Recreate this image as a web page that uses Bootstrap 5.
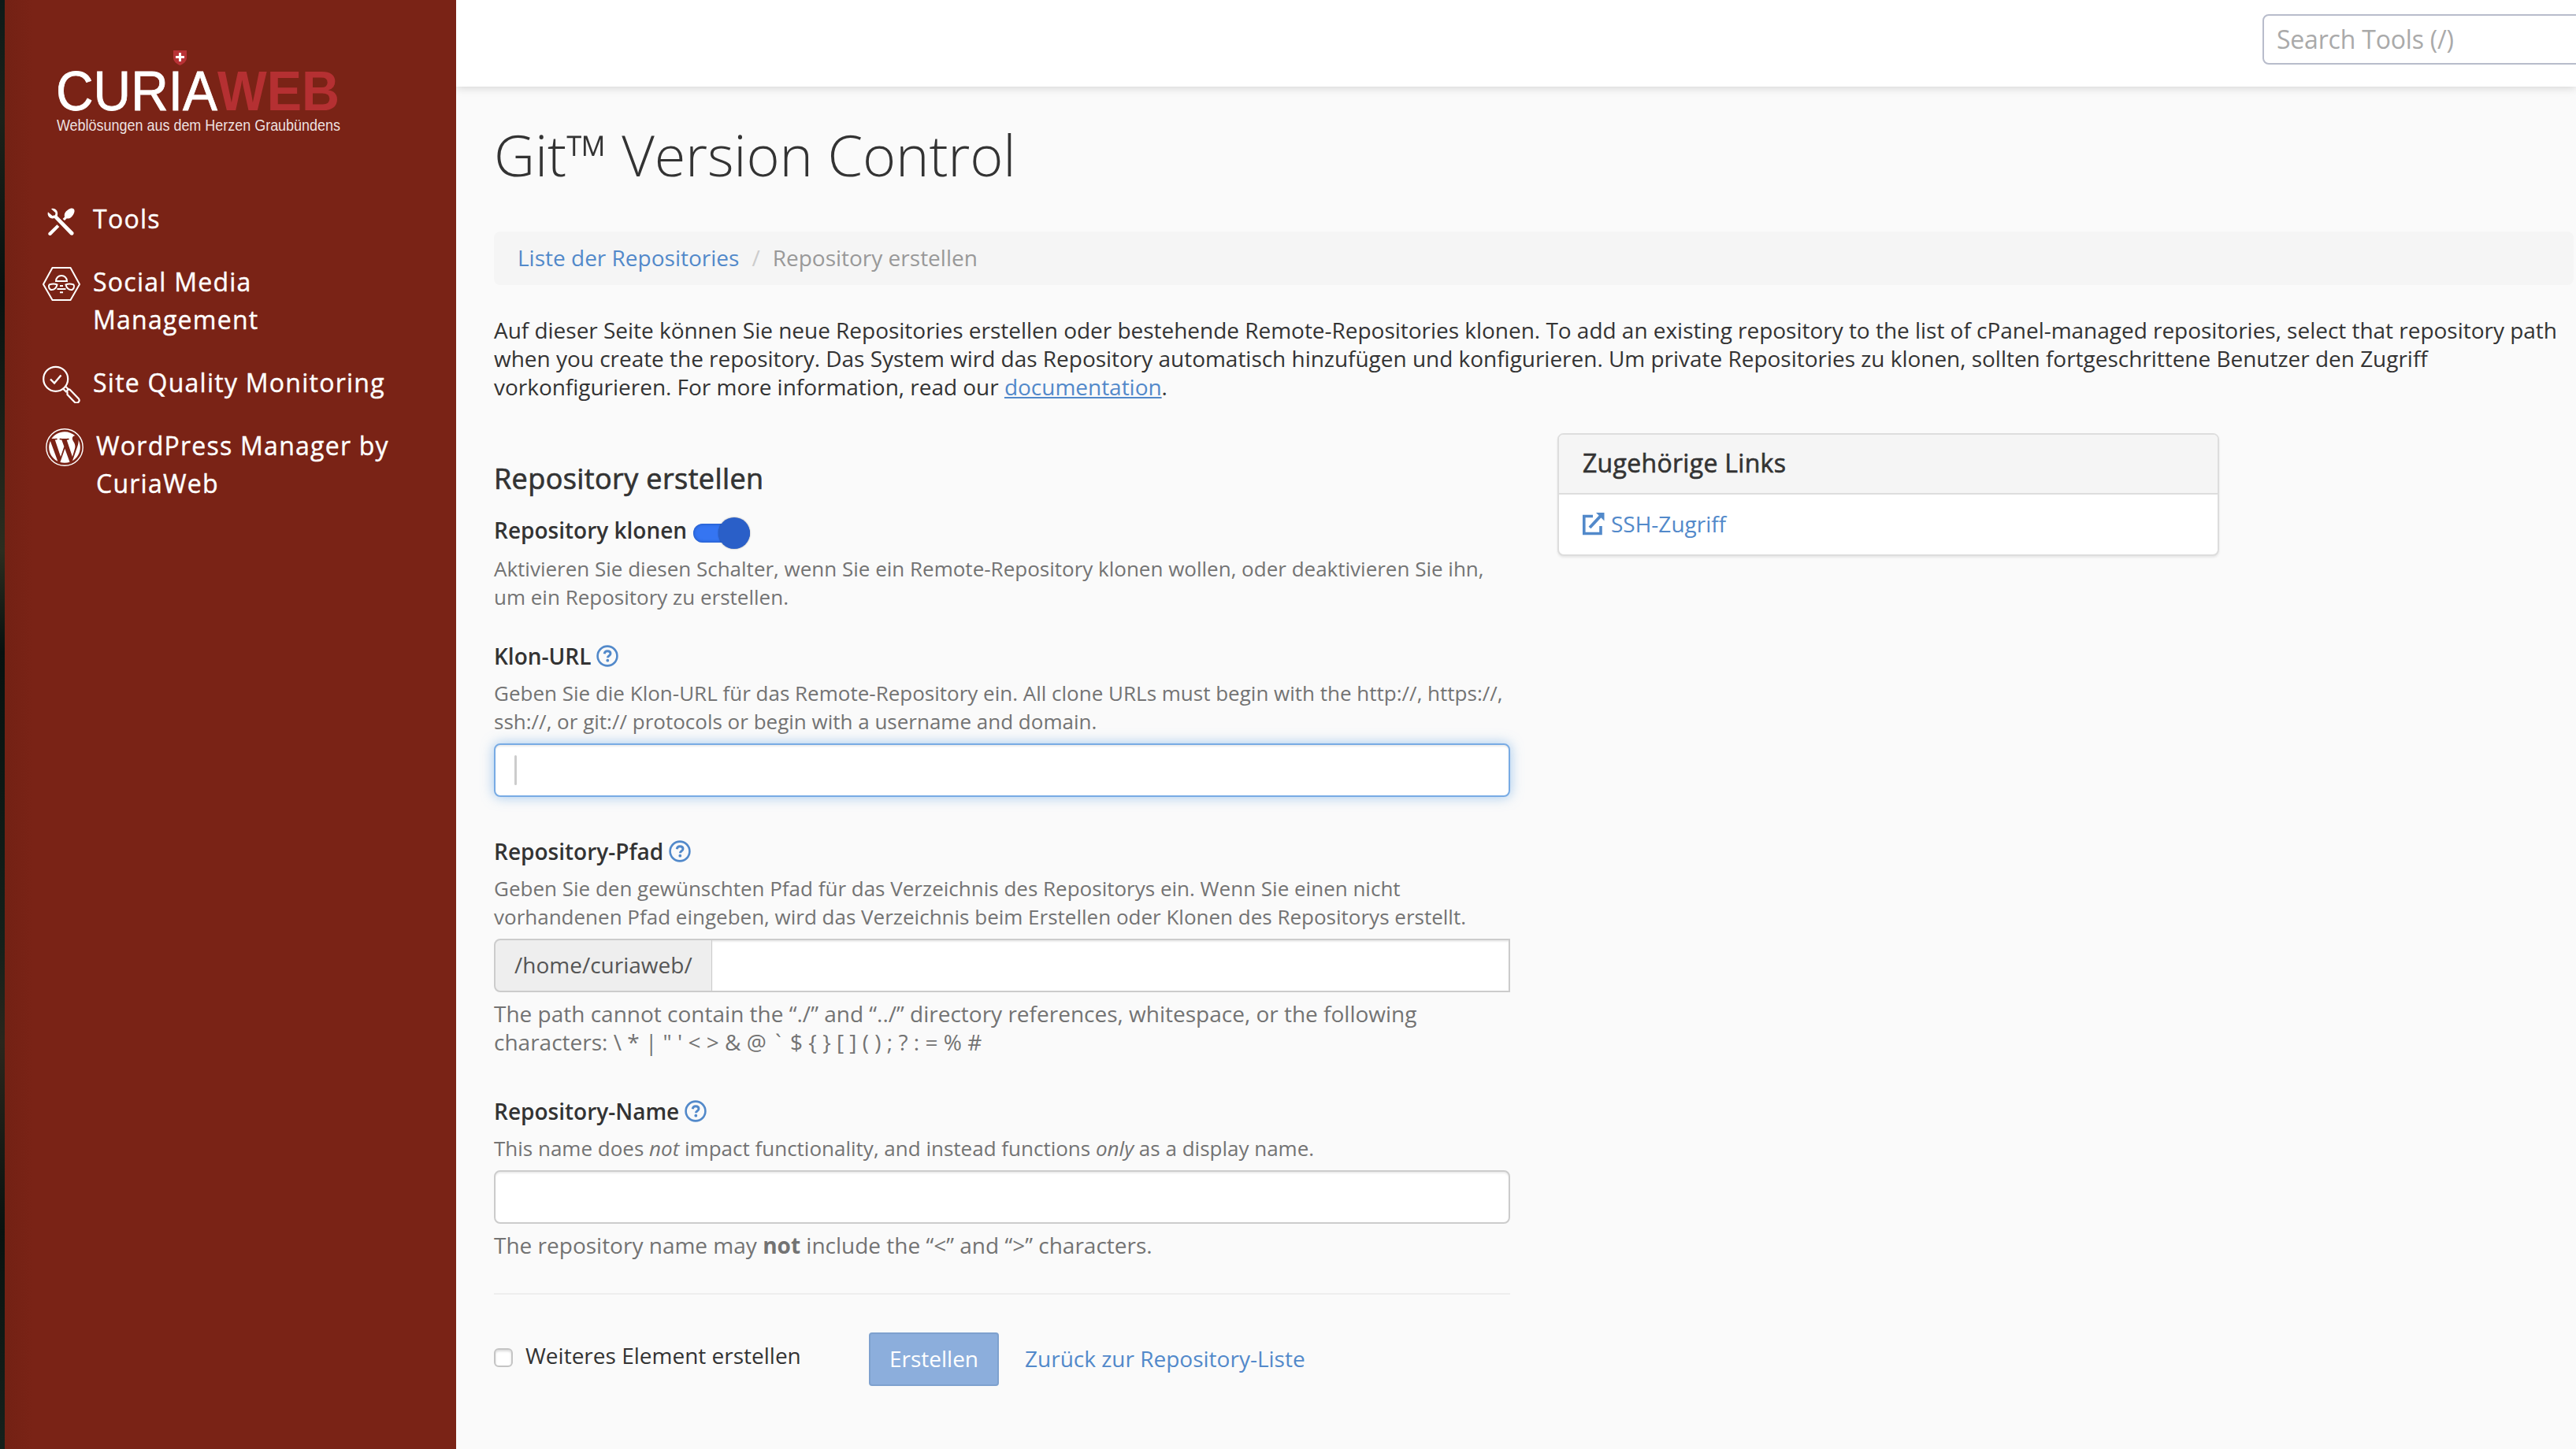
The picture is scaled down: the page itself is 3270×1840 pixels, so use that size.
<!DOCTYPE html>
<html lang="de">
<head>
    <meta charset="UTF-8">
    <meta name="viewport" content="width=device-width, initial-scale=1.0">
    <title>Git Version Control</title>
    <link rel="stylesheet" href="https://cdn.jsdelivr.net/npm/bootstrap@5.3.0/dist/css/bootstrap.min.css">
    <style>
        body { font-family: "Open Sans", "Noto Sans", sans-serif; font-size: 28px; line-height: 36px; color: #333; background: #fafafa; height: 1840px; overflow: hidden; }
        a { color: #5289ca; text-decoration: none; }
        .edge { width: 6px; background: linear-gradient(#0d1a18, #1c2119 8%, #07110f 20%, #2c2d1f 38%, #07110f 45%, #14201a 65%, #2a261c 72%, #09120f 85%, #16211c); }
        .sidebar { width: 573px; padding: 0 48px; background: linear-gradient(90deg, #732114, #7a2316 36px); color: #fff; }
        .logo { display: block; margin: 56px 0 0 18px; }
        .menu { margin-top: 78px; gap: 32px; }
        .menu a { color: #fff; font-size: 32px; line-height: 48px; letter-spacing: 1.25px; gap: 16px; -webkit-text-stroke: .4px #fff; }
        .menu svg { width: 48px; height: 48px; margin: 2px 0 -2px; flex: none; }
        .topbar { height: 110px; background: #fff; box-shadow: 0 0 12px rgba(0,0,0,.2); }
        .topbar input { width: 480px; height: 64px; margin: 18px -82px 0 0; padding: 0 16px 1px; font-size: 32px; letter-spacing: -.2px; border: 2px solid #b8bccb; border-radius: 8px; background: #fff; }
        .topbar input::placeholder { color: #aaa; opacity: 1; }
        .content { padding: 46px 3px 0 48px; }
        h1 { font-size: 72px; line-height: 80px; font-weight: 300; letter-spacing: -.15px; margin-bottom: 58px; }
        .breadcrumb { height: 68px; padding: 15px 30px; background: #f5f5f5; border-radius: 8px; margin-bottom: 39px; --bs-breadcrumb-divider-color: #ccc; --bs-breadcrumb-item-padding-x: 16px; --bs-breadcrumb-item-active-color: #999; }
        .intro { letter-spacing: -.025px; margin-bottom: 41px; }
        .intro a { text-decoration: underline; }
        .main-row { --bs-gutter-x: 60px; }
        h3 { font-size: 36px; line-height: 44px; font-weight: 400; letter-spacing: .4px; -webkit-text-stroke: .7px #333; margin: 36px 0 25px; }
        .form-label { display: flex; align-items: center; font-size: 28px; font-weight: 600; height: 36px; margin: 0 0 11px; }
        .form-label svg { width: 28px; height: 28px; margin-left: 7px; }
        .next-label { margin-top: 51px; }
        .name-label { margin-top: 52px; }
        .hint { font-size: 26px; color: #737373; margin-bottom: 10px; }
        .hint-switch { margin: 13px 0 39px; }
        .note { color: #737373; margin: 9px 0 0; }
        .field { height: 68px; border: 2px solid #ccc; border-radius: 8px; background: #fff; box-shadow: inset 0 2px 2px rgba(0,0,0,.075); }
        .field-focus { border-color: #78abe4; box-shadow: inset 0 2px 2px rgba(0,0,0,.075), 0 0 16px rgba(102,165,228,.6); padding: 13px 24px; }
        .caret { width: 3px; height: 38px; background: #ccc; border-radius: 2px; }
        .input-group .field { border-radius: 0; border-left: 0; }
        .input-group-text { height: 68px; padding: 0 24px 2px; font-size: 28px; color: #555; background: #eee; border: 2px solid #ccc; border-radius: 8px 0 0 8px; }
        .toggle { width: 72px; height: 24px; margin: 7px 0 0 8px; border-radius: 12px; background: #3575f2; box-shadow: inset 0 0 4px #1c4fb0; }
        .knob { width: 40px; height: 40px; border-radius: 50%; background: #2a5fc8; box-shadow: 0 0 2px rgba(0,0,0,.4); }
        hr { margin: 43px 0 48px; border-top: 2px solid #eee; opacity: 1; }
        .tick { width: 24px; height: 24px; margin-top: -4px; border: 2px solid #c4c4c4; border-radius: 6px; background: #fff; box-shadow: inset 0 2px 3px rgba(0,0,0,.15); }
        .tick-label { width: 436px; margin: -10px 0 0 16px; }
        .btn-create { width: 165px; height: 68px; padding: 0 0 2px; font-size: 28px; color: #fff; background: #8caedc; border: 2px solid #7ea1ce; border-radius: 4px; }
        .back-link { margin: -2px 0 0 33px; }
        .links { border: 2px solid #ddd; border-radius: 8px; box-shadow: 0 2px 3px rgba(0,0,0,.08); }
        .links .card-header { height: 76px; padding: 0 30px; font-size: 32px; line-height: 72px; letter-spacing: .3px; -webkit-text-stroke: .6px #333; background: #f5f5f5; border-bottom: 2px solid #ddd; }
        .links .card-body { height: 76px; padding: 0 30px 3px; }
    </style>
</head>
<body class="d-flex">
    <svg class="d-none">
        <symbol id="help" viewBox="0 0 28 28">
            <circle cx="14" cy="14" r="12.4" fill="none" stroke="#5289ca" stroke-width="2.6"/>
            <path d="M10.2 11.2c.3-2.3 1.8-3.5 3.9-3.5 2.3 0 3.9 1.2 3.9 3.2 0 2.9-3.6 2.7-3.6 5.3" fill="none" stroke="#5289ca" stroke-width="2.9"/>
            <circle cx="14.3" cy="19.7" r="1.9" fill="#5289ca"/>
        </symbol>
    </svg>

    <div class="edge flex-shrink-0"></div>
    <nav class="sidebar flex-shrink-0">
        <svg class="logo" width="366" height="120" viewBox="0 0 366 120" fill="#fff" font-family="Liberation Sans, Arial, sans-serif">
            <path d="M148 8h17v9c0 5-4 8-8.5 10-4.5-2-8.5-5-8.5-10z" fill="#b83236"/>
            <path d="M155 11h3v4h4v3h-4v4h-3v-4h-4v-3h4z"/>
            <text x="-1" y="84" font-size="71" stroke="#fff" stroke-width=".8" textLength="205" lengthAdjust="spacingAndGlyphs">CURIA</text>
            <text x="204" y="84" font-size="71" font-weight="700" fill="#b53032" textLength="155" lengthAdjust="spacingAndGlyphs">WEB</text>
            <text x="0" y="110" font-size="21" fill-opacity=".88" textLength="360" lengthAdjust="spacingAndGlyphs">Weblösungen aus dem Herzen Graubündens</text>
        </svg>
        <div class="menu d-flex flex-column">
            <a href="#" class="d-flex">
                <svg viewBox="0 0 48 48" fill="#fff">
                    <path d="M11 9.2l5.5 5-.5 3-3.5.8-5.6-4.8C5.4 18.5 10 22.8 15 21.1l20.5 21.2c2.5 1.5 4.9-.8 3.900-3.300L18.800 18.300C20.500 12.500 16.600 7.500 11 9.200z"/>
                    <path d="M28 19.500c-1-3.500.5-6.500 4.500-9.200 2.500-1.700 5.500-2.400 7.300-.8 1.500 1.800.7 4.600-.9 7.200-2.300 3.800-4.600 5.300-8 4.600l-2.900 2.800-2.400-2.200z"/>
                    <path d="M18.400 29.200l2.900 2.800-10.600 10.700c-2 1.300-4.300-.7-3.200-2.900z"/>
                </svg>
                <span>Tools</span>
            </a>
            <a href="#" class="d-flex">
                <svg viewBox="0 0 48 48" fill="none" stroke="#fff" stroke-width="2">
                    <path d="M12.500 4h23L47 25 35.500 45h-23L1 25z" stroke-linejoin="round"/>
                    <path d="M17 21c0-4 3-7 7-7s7 3 7 7z"/>
                    <path d="M8.500 25.500c4-1.500 8-1 10 0-1 4-4 6.500-7 6.500s-4.500-4.500-3-6.500zM39.500 25.500c-4-1.500-8-1-10 0 1 4 4 6.500 7 6.500s4.500-4.500 3-6.500zM22 27h4M18.500 31h11M22 35.200h4"/>
                </svg>
                <span>Social Media<br>Management</span>
            </a>
            <a href="#" class="d-flex">
                <svg viewBox="0 0 48 48" fill="none" stroke="#fff" stroke-width="2.200">
                    <circle cx="16.700" cy="17.300" r="15.500"/>
                    <path d="M10 17.500l5 5 8.500-10" stroke-width="2.400"/>
                    <path d="M26 29.500l4.500 4.500M29 26.500l4.500 4.500M31.500 34c-1.500-2 1.500-4.500 3.500-3l11 11.500c2 3-1.500 6.500-5 4.500L31.500 37z"/>
                </svg>
                <span>Site Quality Monitoring</span>
            </a>
            <a href="#" class="d-flex ps-1">
                <svg viewBox="0 0 24 24" fill="#fff">
                    <circle cx="12" cy="12" r="11.600" fill="none" stroke="#fff" stroke-width=".7"/>
                    <g transform="translate(.96 .96) scale(.92)">
                        <path d="M21.469 6.825c.84 1.537 1.318 3.3 1.318 5.175 0 3.979-2.156 7.456-5.363 9.325l3.295-9.527c.615-1.54.82-2.771.82-3.864 0-.405-.026-.78-.07-1.11m-7.981.105c.647-.03 1.232-.105 1.232-.105.582-.075.514-.93-.067-.899 0 0-1.755.135-2.88.135-1.064 0-2.85-.15-2.85-.15-.585-.03-.661.855-.075.885 0 0 .54.061 1.125.09l1.68 4.605-2.37 7.08L5.354 6.9c.649-.03 1.234-.1 1.234-.1.585-.075.516-.93-.065-.896 0 0-1.746.138-2.874.138-.2 0-.438-.008-.69-.015C4.911 3.15 8.235 1.215 12 1.215c2.809 0 5.365 1.072 7.286 2.833-.046-.003-.091-.009-.141-.009-1.06 0-1.812.923-1.812 1.914 0 .89.513 1.643 1.06 2.531.411.72.89 1.643.89 2.977 0 .915-.354 1.994-.821 3.479l-1.075 3.585-3.9-11.61zM12 22.784c-1.059 0-2.081-.153-3.048-.437l3.237-9.406 3.315 9.087c.024.053.05.101.078.149-1.12.393-2.325.609-3.582.609M1.211 12c0-1.564.336-3.05.935-4.39L7.29 21.709C3.694 19.96 1.212 16.271 1.211 12"/>
                    </g>
                </svg>
                <span>WordPress Manager by<br>CuriaWeb</span>
            </a>
        </div>
    </nav>

    <div class="flex-grow-1 overflow-hidden">
        <header class="topbar d-flex justify-content-end">
            <input type="text" placeholder="Search Tools (/)">
        </header>
        <main class="content">
            <h1>Git™ Version Control</h1>
            <ol class="breadcrumb">
                <li class="breadcrumb-item"><a href="#">Liste der Repositories</a></li>
                <li class="breadcrumb-item active">Repository erstellen</li>
            </ol>
            <p class="intro">Auf dieser Seite können Sie neue Repositories erstellen oder bestehende Remote-Repositories klonen. To add an existing repository to the list of cPanel-managed repositories, select that repository path when you create the repository. Das System wird das Repository automatisch hinzufügen und konfigurieren. Um private Repositories zu klonen, sollten fortgeschrittene Benutzer den Zugriff vorkonfigurieren. For more information, read our <a href="#">documentation</a>.</p>

            <div class="row main-row">
                <div class="col-6">
                    <h3>Repository erstellen</h3>
                    <div class="form-label mb-0">Repository klonen
                        <span class="toggle d-flex align-items-center justify-content-end"><span class="knob"></span></span>
                    </div>
                    <p class="hint hint-switch">Aktivieren Sie diesen Schalter, wenn Sie ein Remote-Repository klonen wollen, oder deaktivieren Sie ihn, um ein Repository zu erstellen.</p>

                    <div class="form-label">Klon-URL <svg><use href="#help"/></svg></div>
                    <p class="hint">Geben Sie die Klon-URL für das Remote-Repository ein. All clone URLs must begin with the http://, https://, ssh://, or git:// protocols or begin with a username and domain.</p>
                    <div class="field field-focus"><div class="caret"></div></div>

                    <div class="form-label next-label">Repository-Pfad <svg><use href="#help"/></svg></div>
                    <p class="hint">Geben Sie den gewünschten Pfad für das Verzeichnis des Repositorys ein. Wenn Sie einen nicht vorhandenen Pfad eingeben, wird das Verzeichnis beim Erstellen oder Klonen des Repositorys erstellt.</p>
                    <div class="input-group">
                        <span class="input-group-text">/home/curiaweb/</span>
                        <div class="field flex-grow-1"></div>
                    </div>
                    <p class="note">The path cannot contain the “./” and “../” directory references, whitespace, or the following<br>characters: \ * | " ' &lt; &gt; &amp; @ <span class="px-1">`</span> $ { } [ ] ( ) ; ? : = % #</p>

                    <div class="form-label name-label">Repository-Name <svg><use href="#help"/></svg></div>
                    <p class="hint">This name does <em>not</em> impact functionality, and instead functions <em>only</em> as a display name.</p>
                    <div class="field"></div>
                    <p class="note">The repository name may <strong>not</strong> include the “&lt;” and “&gt;” characters.</p>
                    <hr>
                    <div class="d-flex align-items-center">
                        <span class="tick"></span>
                        <span class="tick-label">Weiteres Element erstellen</span>
                        <button type="button" class="btn btn-create">Erstellen</button>
                        <a href="#" class="back-link">Zurück zur Repository-Liste</a>
                    </div>
                </div>
                <div class="col-4">
                    <div class="card links">
                        <div class="card-header">Zugehörige Links</div>
                        <div class="card-body d-flex align-items-center">
                            <svg width="28" height="30" viewBox="0 0 28 30" fill="none" stroke="#5289ca" stroke-width="3.6">
                                <path d="M13 5.500H1.800v22H23V18"/>
                                <path d="M9 20L23 5" stroke-width="4"/>
                                <path d="M17 1h10.500v10.500z" fill="#5289ca" stroke="none"/>
                            </svg>
                            <a href="#" class="ms-2">SSH-Zugriff</a>
                        </div>
                    </div>
                </div>
            </div>
        </main>
    </div>

    <script src="https://cdn.jsdelivr.net/npm/bootstrap@5.3.0/dist/js/bootstrap.bundle.min.js"></script>
</body>
</html>
